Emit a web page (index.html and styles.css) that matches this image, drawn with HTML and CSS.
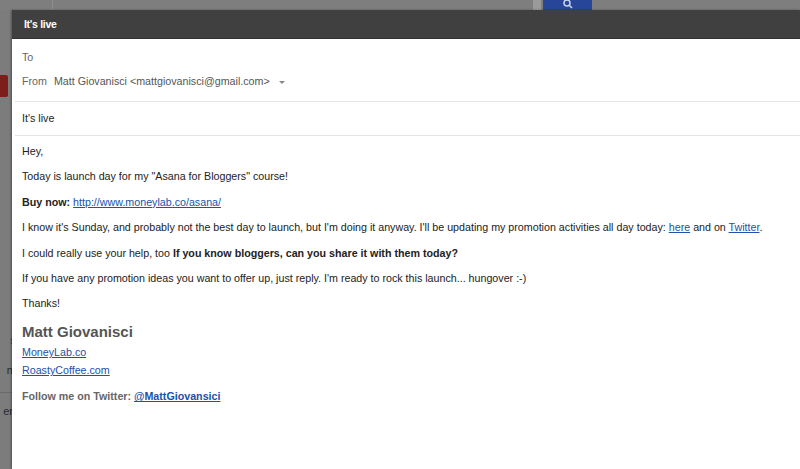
FILE: index.html
```html
<!DOCTYPE html>
<html lang="en">
<head>
    <meta charset="UTF-8">
    <meta name="viewport" content="width=device-width, initial-scale=1.0">
    <title>It's live</title>
    <link rel="stylesheet" href="styles.css">
</head>
<body>
    <!-- Gmail dimmed in the background -->
    <div class="backdrop">
        <div class="topbar">
            <div class="topbar-split"></div>
            <div class="search-end"></div>
            <div class="search-btn">
                <svg width="12" height="10" viewBox="0 0 12 10">
                    <circle cx="5" cy="3" r="3" fill="none" stroke="#c9d3ea" stroke-width="1.5"/>
                    <line x1="7.2" y1="5.2" x2="10" y2="8" stroke="#c9d3ea" stroke-width="1.6"/>
                </svg>
            </div>
        </div>
        <div class="sidebar">
            <div class="compose-btn"></div>
            <div class="side-item side-s">s</div>
            <div class="side-item side-m">m</div>
            <div class="side-rule"></div>
            <div class="side-item side-ert">ert</div>
        </div>
    </div>

    <!-- Compose window -->
    <div class="compose">
        <div class="compose-header">It's live</div>
        <div class="fields">
            <div class="field">To</div>
            <div class="field">
                <span class="label">From</span>
                <span class="from-value">Matt Giovanisci &lt;mattgiovanisci@gmail.com&gt;</span>
                <span class="caret"></span>
            </div>
        </div>
        <div class="subject">It's live</div>
        <div class="message">
            <p>Hey,</p>
            <p>Today is launch day for my "Asana for Bloggers" course!</p>
            <p><b>Buy now:</b> <a href="#">http://www.moneylab.co/asana/</a></p>
            <p>I know it's Sunday, and probably not the best day to launch, but I'm doing it anyway. I'll be updating my promotion activities all day today: <a href="#">here</a> and on <a href="#">Twitter</a>.</p>
            <p>I could really use your help, too <b>If you know bloggers, can you share it with them today?</b></p>
            <p>If you have any promotion ideas you want to offer up, just reply. I'm ready to rock this launch... hungover :-)</p>
            <p>Thanks!</p>
            <div class="signature">
                <div class="sig-name">Matt Giovanisci</div>
                <a class="sig-link" href="#">MoneyLab.co</a>
                <a class="sig-link" href="#">RoastyCoffee.com</a>
                <div class="sig-follow">Follow me on Twitter: <a href="#">@MattGiovansici</a></div>
            </div>
        </div>
    </div>
</body>
</html>
```
FILE: styles.css
```css
/* Base */
body {
    margin: 0;
    height: 469px;
    overflow: hidden;
    position: relative;
    font-family: "Liberation Sans", Arial, sans-serif;
    background-color: #7c7c7c;
}

/* Background (dimmed gmail) */
.backdrop {
    height: 100%;
    display: flex;
    flex-direction: column;
}
.topbar {
    height: 10px;
    display: flex;
    background-color: #7e7e7e;
}
.topbar-split {
    width: 1px;
    margin-left: 52px;
    background-color: #8e8e8e;
}
.search-end {
    width: 8px;
    margin-left: 480px;
    background-color: #9a9a9a;
}
.search-btn {
    width: 49px;
    margin-left: 2px;
    background-color: #27469a;
    display: flex;
    justify-content: center;
    align-items: flex-start;
}
.sidebar {
    flex: 1;
    width: 12px;
    position: relative;
    color: #2a2a2a;
    font-size: 11px;
}
.compose-btn {
    width: 8px;
    height: 22px;
    margin-top: 65px;
    background-color: #7e1e1a;
    border-radius: 0 2px 2px 0;
}
.side-item {
    position: absolute;
    right: -4px;
}
.side-s { top: 324px; }
.side-m { top: 354px; }
.side-ert { top: 395px; }
.side-rule {
    position: absolute;
    top: 382px;
    left: 0;
    width: 12px;
    height: 1px;
    background-color: #6a6a6a;
}

/* Compose window */
.compose {
    position: absolute;
    top: 10px;
    left: 12px;
    right: 0;
    bottom: 0;
    background-color: #fff;
    box-shadow: -1px 0 2px rgba(0, 0, 0, 0.35);
    font-size: 10.7px;
    color: #222;
}
.compose-header {
    height: 29px;
    line-height: 29px;
    padding-left: 12px;
    background-color: #404040;
    border-bottom: 1px solid #333;
    box-sizing: border-box;
    color: #fff;
    font-weight: bold;
    font-size: 10.5px;
    letter-spacing: -0.3px;
}
.fields {
    padding: 6px 0 8px 7px;
    margin-left: 3px;
    border-bottom: 1px solid #e4e4e4;
}
.field {
    height: 24px;
    line-height: 24px;
    color: #666;
    display: flex;
    align-items: center;
}
.label {
    margin-right: 7px;
}
.from-value {
    color: #555;
}
.caret {
    width: 0;
    height: 0;
    margin-left: 9px;
    margin-top: 2px;
    border-left: 3px solid transparent;
    border-right: 3px solid transparent;
    border-top: 3px solid #888;
}
.subject {
    height: 33px;
    line-height: 33px;
    padding-left: 7px;
    margin-left: 3px;
    border-bottom: 1px solid #e4e4e4;
    color: #222;
}

/* Message body */
.message {
    padding: 7px 10px 0 10px;
}
.message p {
    margin: 0 0 9.4px 0;
    line-height: 16px;
}
.message a {
    color: #2250ab;
}
.signature {
    margin-top: 12px;
    display: flex;
    flex-direction: column;
    align-items: flex-start;
}
.sig-name {
    font-size: 15px;
    font-weight: bold;
    color: #555;
    line-height: 18px;
    margin-bottom: 2px;
}
.sig-link {
    line-height: 18px;
}
.sig-follow {
    margin-top: 8px;
    line-height: 18px;
    font-weight: bold;
    color: #666;
}
```
